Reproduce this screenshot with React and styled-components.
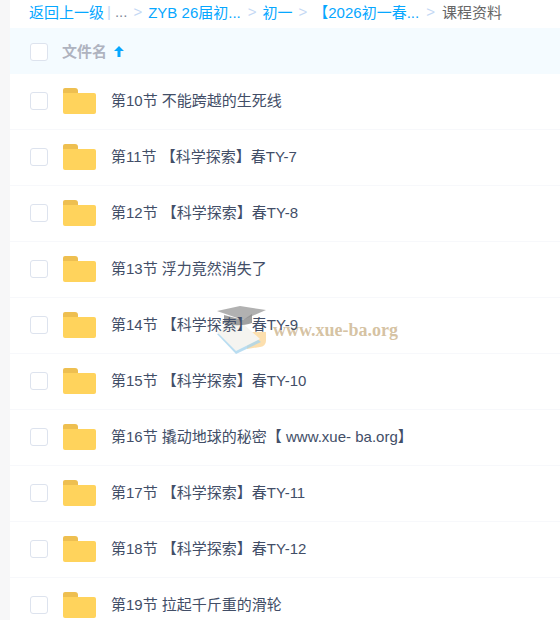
import React from 'react';
import styled, { createGlobalStyle } from 'styled-components';

/* ========== STYLES ========== */
const GlobalStyle = createGlobalStyle`
  html, body {
    margin: 0;
    padding: 0;
    background: #f7f7f8;
    overflow: hidden;
  }
  * {
    box-sizing: border-box;
  }
`;

const Page = styled.div`
  position: relative;
  width: 550px;
  height: 620px;
  margin-left: 10px;
  overflow: hidden;
  background: #fff;
  font-family: 'Liberation Sans', 'Noto Sans CJK SC', sans-serif;
  font-size: 15px;
`;

const Breadcrumb = styled.div`
  display: flex;
  align-items: center;
  height: 28px;
  padding: 0 0 6px 19px;
  white-space: nowrap;
  color: #666;
`;

const CrumbLink = styled.span`
  color: #06a7ff;
`;

const Divider = styled.span`
  color: #c4d8f4;
  margin: 0 4px 0 3px;
`;

const Dots = styled.span`
  color: #818999;
`;

const Arrow = styled.span`
  color: #c4d8f4;
  margin: ${(props) => props.$margin || '0 7px'};
`;

const HeaderRow = styled.div`
  display: flex;
  align-items: center;
  height: 46px;
  padding: 2px 0 0 20px;
  background: #f4fbff;
`;

const Check = styled.span`
  flex: none;
  width: 18px;
  height: 18px;
  border: 1px solid #dde3ee;
  border-radius: 3px;
  background: #fff;
`;

const HeaderLabel = styled.span`
  margin: -4px 0 0 14px;
  color: #afb3bf;
  font-weight: 700;
`;

const SortIcon = styled.svg`
  margin: -1px 0 0 7px;
`;

const Row = styled.div`
  display: flex;
  align-items: center;
  height: 56px;
  padding-left: 20px;
  border-bottom: 1px solid #f7f8fb;
  &:first-of-type {
    height: 55px;
  }
  ${Check} {
    margin-top: -2px;
  }
`;

const FolderWrap = styled.svg`
  flex: none;
  margin: -3px 0 0 15px;
`;

const FileName = styled.span`
  position: relative;
  z-index: 1;
  margin: -4px 0 0 15px;
  color: #424e67;
  white-space: nowrap;
`;

const Watermark = styled.div`
  position: absolute;
  left: 207px;
  top: 305px;
  display: flex;
  align-items: center;
  pointer-events: none;
`;

const WatermarkText = styled.span`
  margin: 1px 0 0 6px;
  font-family: 'Liberation Serif', serif;
  font-size: 18px;
  font-weight: 700;
  color: rgba(190, 160, 110, 0.65);
  white-space: nowrap;
`;

/* ========== COMPONENT ========== */
const files = [
  '第10节 不能跨越的生死线',
  '第11节 【科学探索】春TY-7',
  '第12节 【科学探索】春TY-8',
  '第13节 浮力竟然消失了',
  '第14节 【科学探索】春TY-9',
  '第15节 【科学探索】春TY-10',
  '第16节 撬动地球的秘密【 www.xue- ba.org】',
  '第17节 【科学探索】春TY-11',
  '第18节 【科学探索】春TY-12',
  '第19节 拉起千斤重的滑轮',
];

const Folder = () => (
  <FolderWrap width="33" height="27" viewBox="0 0 33 27">
    <path d="M0 3a2 2 0 0 1 2-2h10a3 3 0 0 1 3 3v2H0z" fill="#eebf50" />
    <path d="M0 6h31a2 2 0 0 1 2 2v17a2 2 0 0 1-2 2H2a2 2 0 0 1-2-2z" fill="#ffd35c" />
  </FolderWrap>
);

const App = () => (
  <Page>
    <GlobalStyle />
    <Breadcrumb>
      <CrumbLink>返回上一级</CrumbLink>
      <Divider>|</Divider>
      <Dots>...</Dots>
      <Arrow $margin="0 6px">&gt;</Arrow>
      <CrumbLink>ZYB 26届初...</CrumbLink>
      <Arrow $margin="0 6px 0 7px">&gt;</Arrow>
      <CrumbLink>初一</CrumbLink>
      <Arrow $margin="0 6px">&gt;</Arrow>
      <CrumbLink>【2026初一春...</CrumbLink>
      <Arrow>&gt;</Arrow>
      <span>课程资料</span>
    </Breadcrumb>
    <HeaderRow>
      <Check />
      <HeaderLabel>文件名</HeaderLabel>
      <SortIcon width="10" height="11" viewBox="0 0 10 11">
        <path d="M5 0 10 5H6.5v6h-3V5H0z" fill="#06a7ff" />
      </SortIcon>
    </HeaderRow>
    {files.map((name) => (
      <Row key={name}>
        <Check />
        <Folder />
        <FileName>{name}</FileName>
      </Row>
    ))}
    <Watermark>
      <svg width="50" height="50" viewBox="0 0 50 50">
        <path d="M30 27h19v9a6 6 0 0 1-6 6l-13 2z" fill="#fbd9a0" opacity="0.85" />
        <path d="M0 29 19 49 44 37 22 20z" fill="#a8d4ee" opacity="0.8" />
        <path d="M0 27 19 46 43 34 22 15z" fill="#f5f4f0" />
        <path d="M0 6 23 1l26 4-23 10z" fill="#a9a9a9" opacity="0.9" />
        <path d="M7 10v8c6 3 20 3 28 0V9l-9 6z" fill="#8f8f8f" opacity="0.85" />
      </svg>
      <WatermarkText>www.xue-ba.org</WatermarkText>
    </Watermark>
  </Page>
);

export default App;
